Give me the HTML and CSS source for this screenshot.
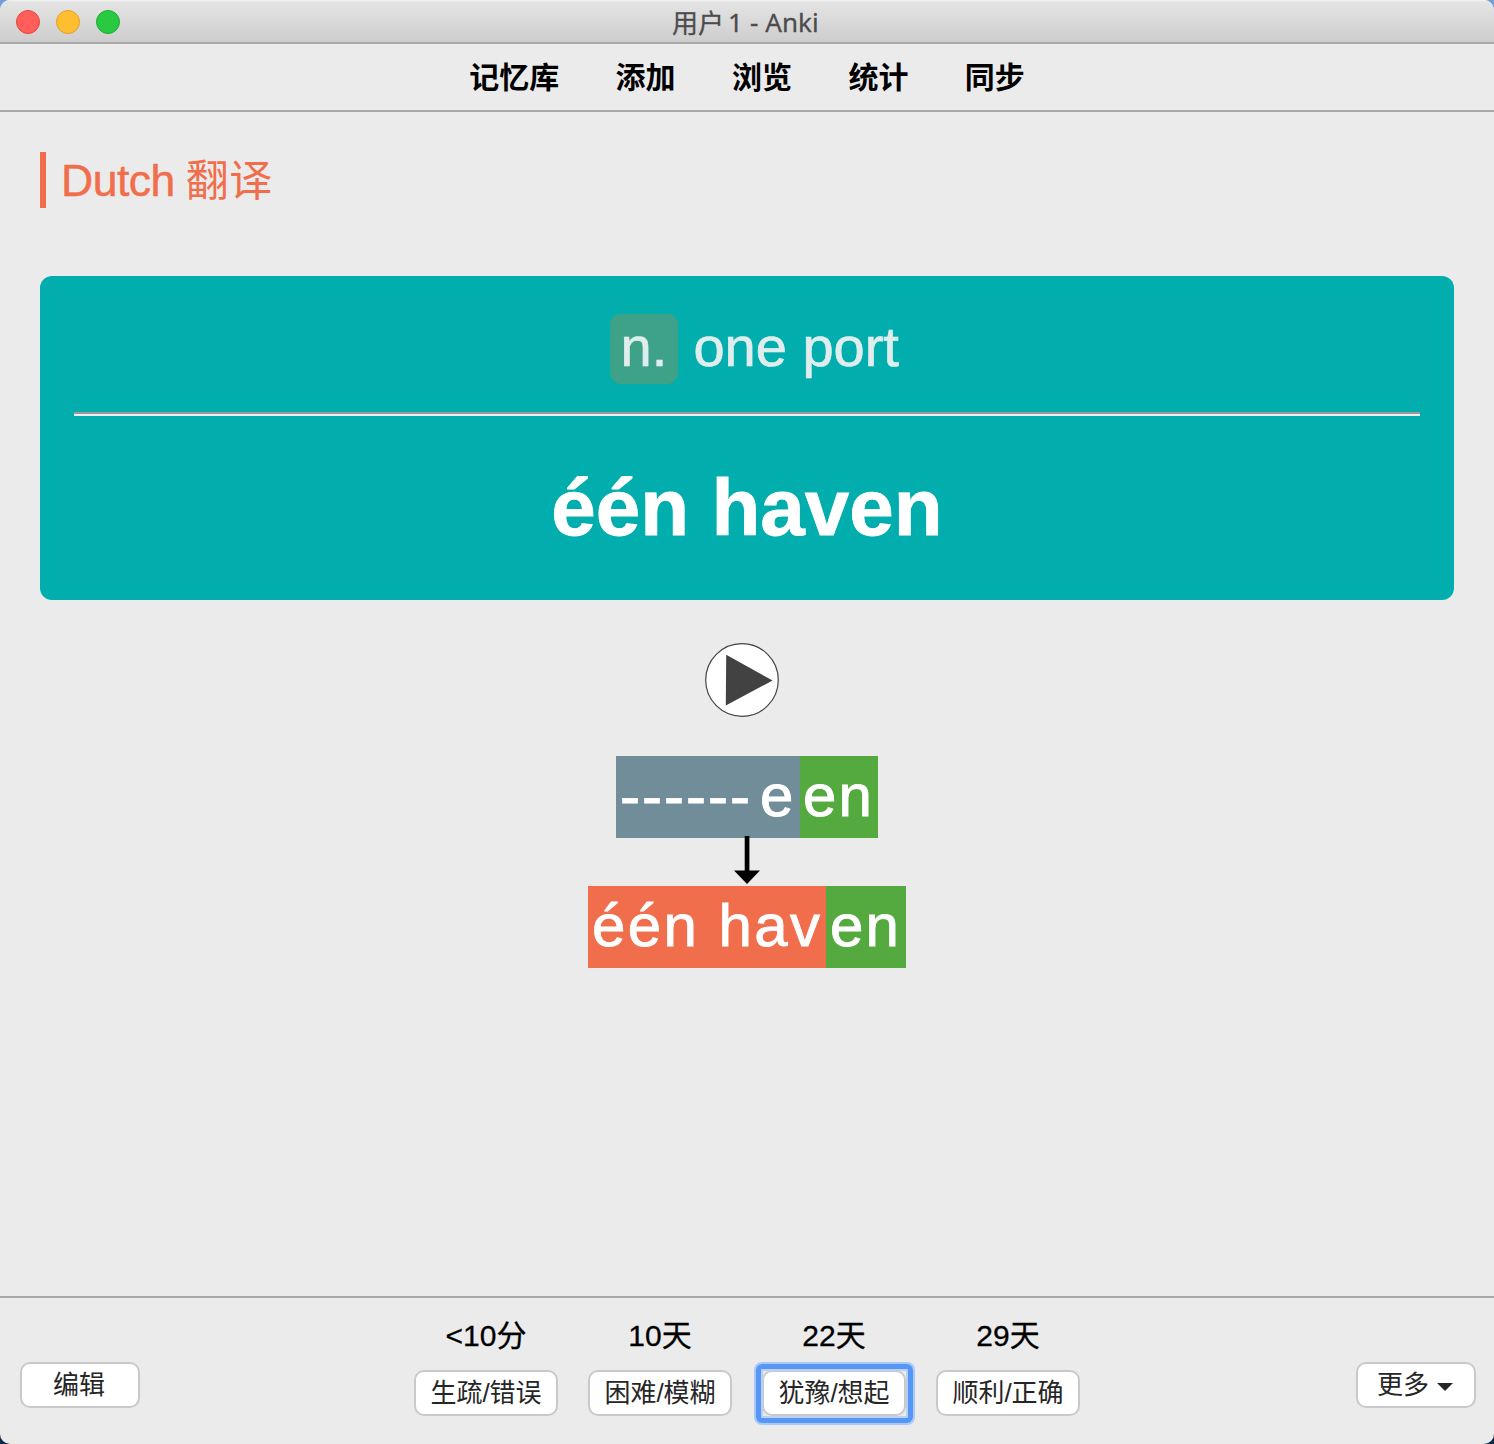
FILE: index.html
```html
<!DOCTYPE html>
<html lang="zh-CN">
<head>
<meta charset="utf-8">
<title>用户 1 - Anki</title>
<link rel="stylesheet" href="styles.css">
</head>
<body>
<div class="window">
  <header class="titlebar">
    <div class="lights"><i class="light red"></i><i class="light yellow"></i><i class="light green"></i></div>
    <div class="title">用户<span class="title-latin">1 - Anki</span></div>
  </header>
  <nav class="toolbar">
    <a>记忆库</a><a>添加</a><a>浏览</a><a>统计</a><a>同步</a>
  </nav>
  <main class="review">
    <h1 class="deck"><span>Dutch</span><span class="deck-zh">翻译</span></h1>
    <section class="card">
      <div class="meaning"><span class="pos">n.</span><span>one port</span></div>
      <hr class="rule">
      <div class="word">één haven</div>
    </section>
    <svg class="play" width="74" height="74" viewBox="0 0 74 74">
      <circle cx="37" cy="37" r="36.3" fill="#fff" stroke="#424242" stroke-width="1.2"/>
      <path d="M21.2 11.8 67.6 37.5 20.8 62.4Z" fill="#424242"/>
    </svg>
    <div class="compare">
      <div class="typed"><span class="missed"><span>------</span><span>e</span></span><span class="good">en</span></div>
      <svg class="arrow" width="26" height="50" viewBox="0 0 26 50">
        <path d="M10.7 0h4.7v34.5H26L13 48 0 34.5h10.7Z"/>
      </svg>
      <div class="expected"><span class="bad">één hav</span><span class="good">en</span></div>
    </div>
  </main>
  <footer class="bottom">
    <button class="btn side">编辑</button>
    <div class="answers">
      <div class="answer"><span class="due">&lt;10分</span><button class="btn">生疏/错误</button></div>
      <div class="answer"><span class="due">10天</span><button class="btn">困难/模糊</button></div>
      <div class="answer"><span class="due">22天</span><button class="btn focused">犹豫/想起</button></div>
      <div class="answer"><span class="due">29天</span><button class="btn">顺利/正确</button></div>
    </div>
    <button class="btn side">更多<svg class="caret" width="16" height="8" viewBox="0 0 16 8"><path d="M0 0h16L8 8Z"/></svg></button>
  </footer>
</div>
</body>
</html>
```
FILE: styles.css
```css
* { box-sizing: border-box; }
body {
  margin: 0;
  background: linear-gradient(#6f9fd6 50%, #0c2a47 50%);
  font-family: "Liberation Sans", "Noto Sans CJK SC", sans-serif;
}
.window {
  width: 1494px;
  height: 1444px;
  display: flex;
  flex-direction: column;
  overflow: hidden;
  border-radius: 10px;
  background: #ebebeb;
}
.titlebar {
  height: 44px;
  display: grid;
  grid-template-columns: 1fr auto 1fr;
  align-items: center;
  padding: 0 16px;
  border-bottom: 2px solid #a9a9a9;
  background: linear-gradient(#f3f3f3 0, #e4e4e4 2px, #cdcdcd 100%);
}
.lights { display: flex; gap: 16px; padding-top: 2px; }
.light { width: 24px; height: 24px; border-radius: 50%; border: 1px solid; }
.red { background: #ff5f58; border-color: #e2463f; }
.yellow { background: #ffbe2f; border-color: #e0a028; }
.green { background: #29ca41; border-color: #1bac2c; }
.title {
  display: flex;
  gap: 4px;
  padding-top: 1px;
  margin-left: -3px;
  font: 26px/40px "Noto Sans CJK SC", sans-serif;
  color: #4c4c4c;
  -webkit-text-stroke: 0.3px #4c4c4c;
}
.title-latin { font-family: "Noto Sans", sans-serif; letter-spacing: 0.1px; }
.toolbar {
  height: 68px;
  display: flex;
  justify-content: center;
  gap: 56.4px;
  border-bottom: 2px solid #a8a8a8;
  font: 700 30px/62px "Noto Sans CJK SC", sans-serif;
  color: #000;
}
.review {
  flex: 1;
  display: flex;
  flex-direction: column;
  padding: 40px 40px 0;
}
.deck {
  margin: 0;
  height: 56px;
  display: flex;
  align-items: baseline;
  gap: 11px;
  padding-left: 15px;
  border-left: 6px solid #f06e4b;
  font-weight: 400;
  font-size: 44.5px;
  line-height: 51px;
  letter-spacing: -0.5px;
  color: #f06e4b;
  -webkit-text-stroke: 0.5px #f06e4b;
}
.deck-zh {
  font-family: "AR PL UKai CN", "Kaiti SC", KaiTi, "Noto Sans CJK SC", sans-serif;
  font-size: 43px;
  letter-spacing: 0.5px;
  -webkit-text-stroke: 0;
}
.card {
  height: 324px;
  margin-top: 68px;
  padding: 38px 34px 0;
  border-radius: 12px;
  background: #02adae;
  text-align: center;
}
.meaning {
  display: flex;
  justify-content: center;
  gap: 15.6px;
  padding-left: 15px;
  font-size: 56px;
  line-height: 66px;
  color: #dfeeed;
  -webkit-text-stroke: 0.7px #dfeeed;
}
.pos {
  height: 70px;
  padding: 0 10.5px;
  border-radius: 11px;
  background: #3da287;
}
.rule {
  height: 4px;
  margin: 28px 0 0;
  border: 0;
  border-top: 2px solid #9a9a9a;
  border-bottom: 2px solid #eee;
}
.word {
  padding-top: 46px;
  font-size: 80px;
  font-weight: 700;
  line-height: 92px;
  color: #fff;
  -webkit-text-stroke: 0.8px #fff;
}
.play { align-self: center; margin: 43px 10px 0 0; }
.compare {
  display: flex;
  flex-direction: column;
  align-items: center;
  margin-top: 39px;
  font-size: 60px;
  line-height: 80px;
  letter-spacing: 2.2px;
  white-space: nowrap;
  color: #fff;
  -webkit-text-stroke: 0.9px #fff;
}
.typed, .expected { display: flex; height: 82px; }
.missed, .bad, .good { padding: 0 4px; }
.missed { display: flex; gap: 8px; width: 184px; background: #718d99; letter-spacing: 2px; }
.bad { width: 238px; background: #f06e4b; letter-spacing: 2.4px; }
.good { width: 78px; padding-left: 3px; background: #54a93f; }
.expected .good { width: 80px; padding-left: 4px; }
.arrow { margin-top: -2px; }
.bottom {
  height: 148px;
  display: flex;
  justify-content: space-between;
  padding: 0 18px 0 20px;
  border-top: 2px solid #a8a8a8;
}
.btn {
  width: 144px;
  height: 46px;
  padding: 0;
  border: 2px solid #c9c9c9;
  border-radius: 10px;
  background: #fff;
  color: #262626;
  font: 26px/38px "Liberation Sans", "Noto Sans CJK SC", sans-serif;
}
.side {
  width: 120px;
  margin-top: 64px;
  padding-right: 2px;
  display: flex;
  align-items: center;
  justify-content: center;
}
.caret { margin: 3px 0 0 8px; fill: #262626; }
.answers { display: flex; gap: 30px; margin-right: 2px; }
.answer { display: flex; flex-direction: column; }
.due {
  height: 72px;
  font-size: 30px;
  line-height: 76px;
  text-align: center;
  color: #000;
  -webkit-text-stroke: 0.3px #000;
}
.focused { position: relative; }
.focused::after {
  content: "";
  position: absolute;
  inset: -8.5px;
  border: 5px solid #5596f6;
  border-radius: 6px;
  box-shadow: 0 0 0 2px #a9c8f5, inset 0 0 0 2px #b9d1f5;
}
```
